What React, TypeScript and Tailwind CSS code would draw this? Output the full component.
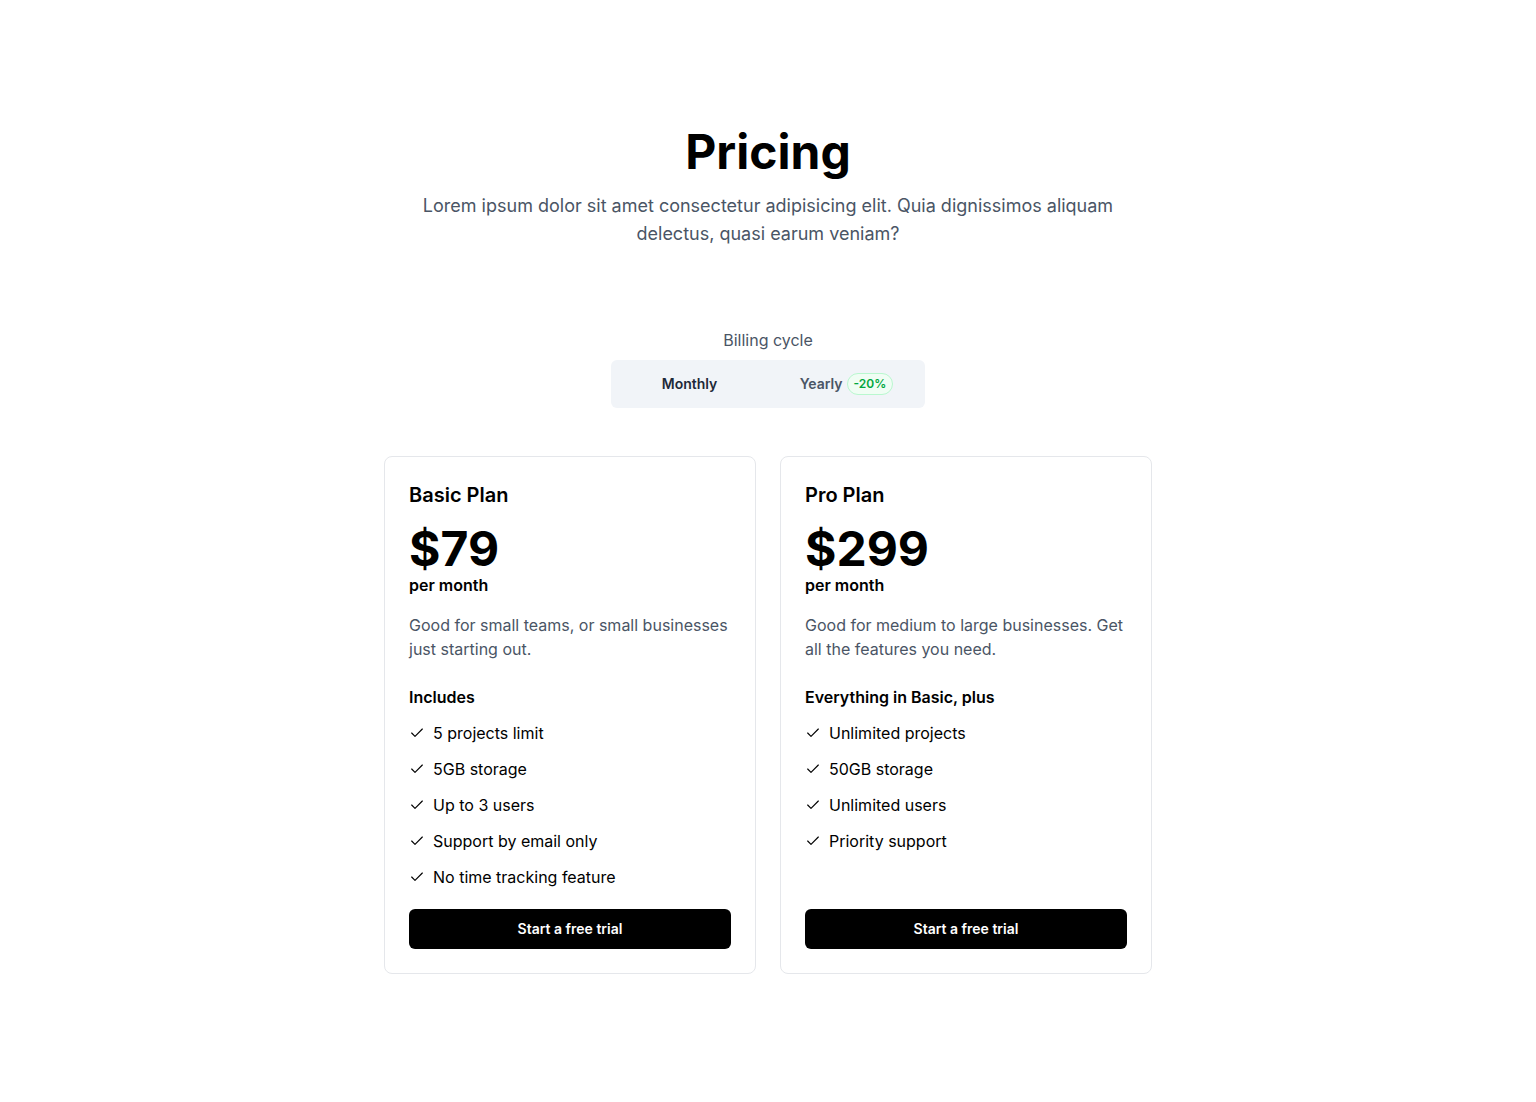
import { useState } from 'react';
import { Check } from 'lucide-react';

interface Plan {
  name: string;
  price: string;
  description: string;
  heading: string;
  features: string[];
}

const plans: Plan[] = [
  {
    name: 'Basic Plan',
    price: '$79',
    description: 'Good for small teams, or small businesses just starting out.',
    heading: 'Includes',
    features: [
      '5 projects limit',
      '5GB storage',
      'Up to 3 users',
      'Support by email only',
      'No time tracking feature',
    ],
  },
  {
    name: 'Pro Plan',
    price: '$299',
    description: 'Good for medium to large businesses. Get all the features you need.',
    heading: 'Everything in Basic, plus',
    features: ['Unlimited projects', '50GB storage', 'Unlimited users', 'Priority support'],
  },
];

export default function App() {
  const [cycle, setCycle] = useState<'monthly' | 'yearly'>('monthly');

  return (
    <div
      className="min-h-screen bg-white text-black"
      style={{ fontFamily: "Inter, 'Noto Sans', sans-serif" }}
    >
      <div className="mx-auto max-w-3xl pt-32 pb-32">
        {/* Header */}
        <div className="text-center">
          <h1 className="text-5xl font-bold leading-none">Pricing</h1>
          <p className="mt-4 text-lg leading-7 text-gray-600">
            Lorem ipsum dolor sit amet consectetur adipisicing elit. Quia dignissimos aliquam
            delectus, quasi earum veniam?
          </p>
        </div>

        {/* Billing toggle */}
        <div className="mt-20 flex flex-col items-center">
          <span className="text-base leading-6 text-gray-600">Billing cycle</span>
          <div className="mt-2 flex w-[314px] rounded-md bg-[#f1f4f8] p-1">
            <button
              onClick={() => setCycle('monthly')}
              className="flex h-10 flex-1 items-center justify-center pr-1 text-sm font-semibold text-gray-800"
            >
              Monthly
            </button>
            <button
              onClick={() => setCycle('yearly')}
              className="flex h-10 flex-1 items-center justify-center gap-1 pl-1 text-sm font-semibold text-gray-600"
            >
              Yearly
              <span className="rounded-full border border-green-200 bg-green-50 px-1.5 py-0.5 text-xs leading-4 font-semibold text-green-600">
                -20%
              </span>
            </button>
          </div>
        </div>

        {/* Plans */}
        <div className="mt-12 grid grid-cols-2 gap-6">
          {plans.map((plan) => (
            <div
              key={plan.name}
              className="flex flex-col rounded-lg border border-gray-200 bg-white p-6"
            >
              <h2 className="text-xl leading-7 font-semibold">{plan.name}</h2>
              <div className="mt-4 text-5xl leading-none font-bold">{plan.price}</div>
              <div className="text-base leading-6 font-semibold">
                {cycle === 'monthly' ? 'per month' : 'per year'}
              </div>
              <p className="mt-4 text-base leading-6 text-gray-600">{plan.description}</p>
              <h3 className="mt-6 text-base leading-6 font-semibold">{plan.heading}</h3>
              <div className="flex-1">
                <ul className="mt-3 flex flex-col gap-3">
                  {plan.features.map((f) => (
                    <li key={f} className="flex items-center gap-2 text-base leading-6">
                      <Check className="h-4 w-4 shrink-0" strokeWidth={1.75} />
                      {f}
                    </li>
                  ))}
                </ul>
              </div>
              <button className="mt-5 h-10 w-full rounded-md bg-black text-sm font-semibold text-white">
                Start a free trial
              </button>
            </div>
          ))}
        </div>
      </div>
    </div>
  );
}
